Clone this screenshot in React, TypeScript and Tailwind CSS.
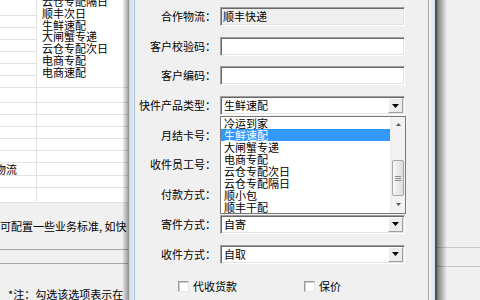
import React from "react";

const sunken =
  "border border-t-[#a0a0a0] border-l-[#a0a0a0] border-r-[#ffffff] border-b-[#ffffff] shadow-[inset_1px_1px_0_#696969,inset_-1px_-1px_0_#e3e3e3]";

function Arrow() {
  return (
    <div className="w-[15px] h-full bg-[#ececec] border border-t-[#ffffff] border-l-[#ffffff] border-r-[#a0a0a0] border-b-[#a0a0a0] flex items-center justify-center">
      <svg width="7" height="4" viewBox="0 0 7 4">
        <path d="M0 0H7L3.5 4Z" fill="#000" />
      </svg>
    </div>
  );
}

function Row({ label, children }: { label: string; children?: React.ReactNode }) {
  return (
    <div className="flex items-center h-[19px] shrink-0">
      <div className="w-[85px] pr-[4px] text-right leading-[19px] whitespace-nowrap">{label}</div>
      <div className="w-[185px] h-[19px]">{children}</div>
    </div>
  );
}

function TextBox({ value, disabled }: { value?: string; disabled?: boolean }) {
  return (
    <div
      className={`${sunken} w-full h-full flex items-center pl-[2px] leading-[17px] ${
        disabled ? "bg-[#f0f0f0]" : "bg-white"
      }`}
    >
      {value}
    </div>
  );
}

function Select({ value }: { value?: string }) {
  return (
    <div className={`${sunken} w-full h-full flex bg-white p-[1px]`}>
      <div className="flex-1 pl-[2px] leading-[15px]">{value}</div>
      <Arrow />
    </div>
  );
}

function Check({ label }: { label: string }) {
  return (
    <div className="flex items-center">
      <div className="w-[11px] h-[11px] bg-white border border-t-[#9a9a9a] border-l-[#9a9a9a] border-r-[#e6e6e6] border-b-[#e6e6e6] shadow-[inset_1px_1px_0_#d0d0d0]" />
      <span className="ml-[4px] leading-[14px]">{label}</span>
    </div>
  );
}

const items = ["冷运到家", "生鲜速配", "大闸蟹专递", "电商专配", "云仓专配次日", "云仓专配隔日", "顺小包", "顺丰干配"];

function DropList() {
  return (
    <div className="absolute left-[85px] top-[116px] w-[186px] h-[98px] bg-white border border-[#7a7a7a] flex">
      <div className="flex-1 flex flex-col">
        {items.map((t, i) => (
          <div
            key={t}
            className={`h-[12px] leading-[12px] pl-[3px] whitespace-nowrap ${
              i === 1 ? "bg-[#3399ff] text-white" : ""
            }`}
          >
            {t}
          </div>
        ))}
      </div>
      <div className="w-[15px] flex flex-col bg-[#f2f2f2] border-l border-l-[#ececec]">
        <div className="h-[15px] flex items-center justify-center">
          <svg width="5" height="3" viewBox="0 0 5 3">
            <path d="M0 3L2.5 0L5 3Z" fill="#5a5a5a" />
          </svg>
        </div>
        <div className="h-[28px]" />
        <div className="h-[36px] mx-[1px] rounded-[2px] border border-[#a6a6a6] bg-gradient-to-r from-[#f7f7f7] to-[#dcdcdc] flex flex-col items-center justify-center gap-[1px]">
          <div className="w-[6px] h-[1px] bg-[#8a8a8a]" />
          <div className="w-[6px] h-[1px] bg-[#8a8a8a]" />
          <div className="w-[6px] h-[1px] bg-[#8a8a8a]" />
        </div>
        <div className="flex-1 flex items-center justify-center">
          <svg width="5" height="3" viewBox="0 0 5 3">
            <path d="M0 0L2.5 3L5 0Z" fill="#5a5a5a" />
          </svg>
        </div>
      </div>
    </div>
  );
}

function LeftPanel() {
  const topLines = ["云仓专配隔日", "顺丰次日", "生鲜速配", "大闸蟹专递", "云仓专配次日", "电商专配", "电商速配"];
  const line = "border-b border-b-[#e2e2e2]";
  return (
    <div className="relative w-[128px] h-full overflow-hidden bg-white flex flex-col">
      <div className={`flex h-[88px] shrink-0 ${line}`}>
        <div className="w-[37px] border-r border-r-[#e2e2e2] flex flex-col">
          <div className={`h-[16px] ${line}`} />
          <div className={`h-[12px] ${line}`} />
          <div className={`h-[12px] ${line}`} />
          <div className={`h-[12px] ${line}`} />
          <div className={`h-[12px] ${line}`} />
          <div className={`h-[12px] ${line}`} />
        </div>
        <div className="pl-[5px] mt-[-4px] flex flex-col">
          {topLines.map((t) => (
            <div key={t} className="h-[11.8px] leading-[11.8px] whitespace-nowrap">
              {t}
            </div>
          ))}
        </div>
      </div>
      {[15, 12, 12, 12, 12, 12, 13, 12, 15].map((h, i) => (
        <div key={i} className={`flex shrink-0 ${line}`} style={{ height: h }}>
          <div className="w-[37px] border-r border-r-[#e2e2e2] flex items-center">
            {i === 6 && <span className="ml-[-5px] whitespace-nowrap">物流</span>}
          </div>
        </div>
      ))}
      <div className="h-[47px] shrink-0 bg-[#f0f0f0] border-b border-b-[#a8a8a8] flex items-center whitespace-nowrap">
        可配置一些业务标准, 如快
      </div>
      <div className="h-[14px] shrink-0 bg-[#f0f0f0] border-b border-b-[#a8a8a8]" />
      <div className="flex-1 bg-[#f0f0f0] pl-[8px] pt-[24px] whitespace-nowrap leading-[12px]">*注：勾选该选项表示在</div>
      <div className="absolute right-0 top-0 bottom-0 w-[6px] bg-gradient-to-r from-transparent to-[rgba(0,0,0,0.35)]" />
    </div>
  );
}

function RightPanel() {
  return (
    <div className="relative flex-1 h-full bg-[#f0f0f0] flex flex-col">
      <div className="h-[248px] shrink-0 border-b border-b-[#c8c8c8]" />
      <div className="h-[19px] shrink-0 border-b border-b-[#c8c8c8]" />
      <div className="absolute left-0 top-0 bottom-0 w-[10px] bg-gradient-to-r from-[rgba(0,0,0,0.5)] to-transparent" />
    </div>
  );
}

export default function App() {
  return (
    <div className="w-[480px] h-[300px] overflow-hidden flex bg-[#f0f0f0] font-['Noto_Sans_CJK_SC','Noto_Sans',sans-serif] text-[11px] text-black">
      <LeftPanel />
      <div className="w-[309px] h-full flex shrink-0">
        <div className="w-[7px] h-full border-l border-l-[#8f8f8f] border-r border-r-[#b0bfd1] bg-gradient-to-r from-[#c9d8ea] to-[#e4ecf6]" />
        <div className="relative w-[293px] h-full bg-[#f0f0f0] pt-[7px] flex flex-col gap-[10.7px]">
          <Row label="合作物流：">
            <TextBox value="顺丰快递" disabled />
          </Row>
          <Row label="客户校验码：">
            <TextBox />
          </Row>
          <Row label="客户编码：">
            <TextBox />
          </Row>
          <Row label="快件产品类型：">
            <Select value="生鲜速配" />
          </Row>
          <Row label="月结卡号：">
            <TextBox />
          </Row>
          <Row label="收件员工号：">
            <TextBox />
          </Row>
          <Row label="付款方式：">
            <Select />
          </Row>
          <Row label="寄件方式：">
            <Select value="自寄" />
          </Row>
          <Row label="收件方式：">
            <Select value="自取" />
          </Row>
          <div className="flex items-center h-[14px] mt-[5px] pl-[43px] shrink-0">
            <Check label="代收货款" />
            <div className="ml-[67px]">
              <Check label="保价" />
            </div>
          </div>
          <DropList />
        </div>
        <div className="w-[9px] h-full border-l border-l-[#a5a5a5] border-r-2 border-r-[#4f4f4f] bg-gradient-to-r from-[#f6f9fd] to-[#d4e1f0]" />
      </div>
      <RightPanel />
    </div>
  );
}
